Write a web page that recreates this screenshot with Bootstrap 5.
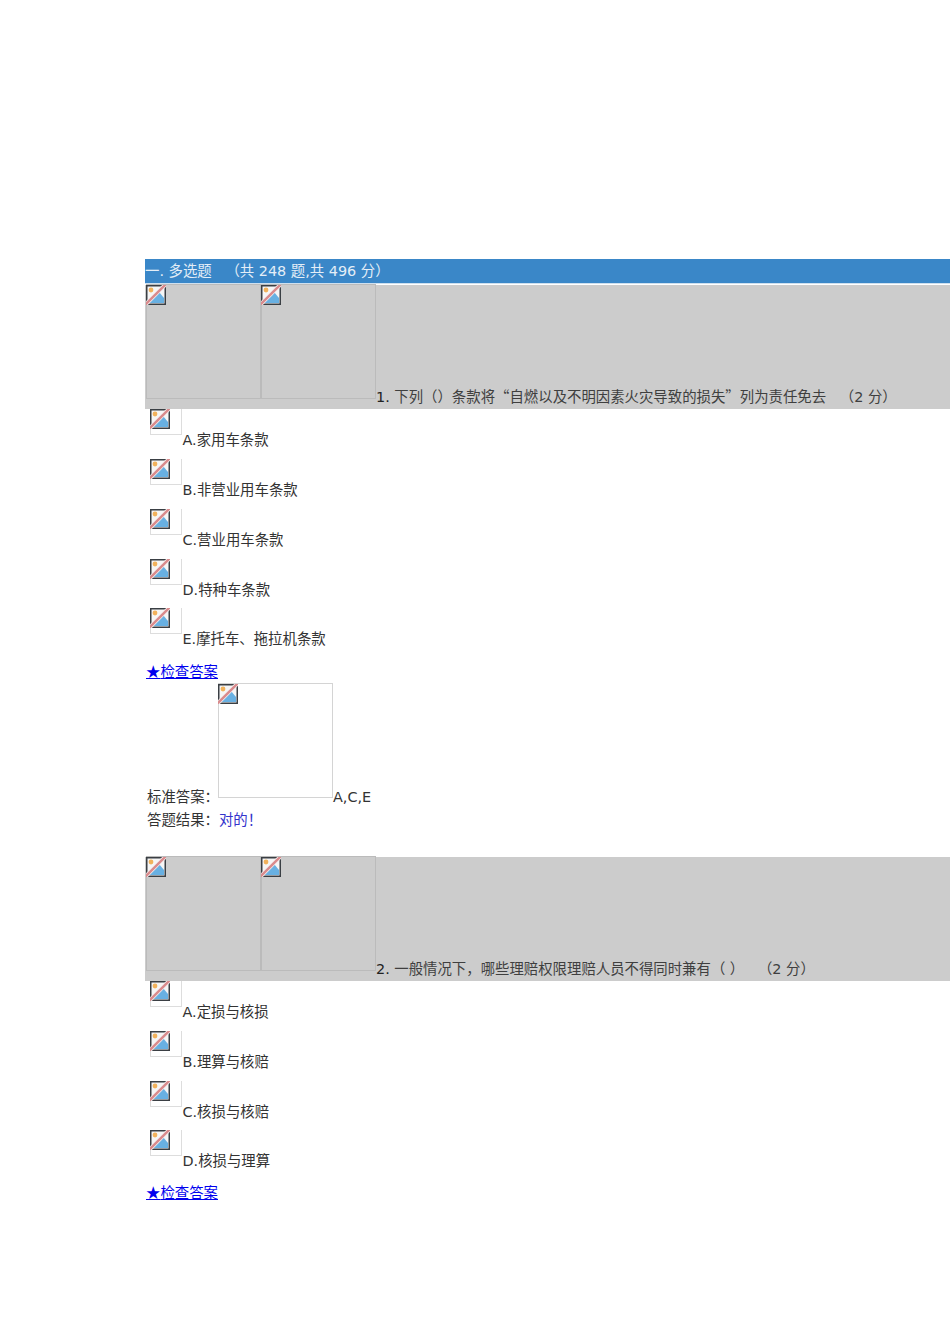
<!DOCTYPE html>
<html lang="zh">
<head>
<meta charset="utf-8">
<title>多选题</title>
<link href="https://cdn.jsdelivr.net/npm/bootstrap@5.3.0/dist/css/bootstrap.min.css" rel="stylesheet">
<style>
html,body{overflow:hidden;background:#fff}
body{font-family:"DejaVu Sans","Noto Sans CJK SC",sans-serif;font-size:14.4px;line-height:18px;color:#333;height:1344px;width:950px}
.cjk{font-family:"Noto Sans CJK SC",sans-serif}
.sheet{padding:259px 0 0 145px;width:950px}
.sec-head{background:#3a87c8;color:#e4eef7;height:24px;line-height:24px;margin-bottom:2px;white-space:nowrap;width:805px;box-shadow:0 1px 0 #cfe0ee}
.q-row{background:#ccc;height:124.25px;width:805px;white-space:nowrap}
.q-row .img-a{margin-left:1px;margin-top:-1px}
.q-row .img-b{margin-top:-1px}
.q-text{padding-bottom:4.25px;line-height:16px;color:#3f3f3f}
.q-text b{font-weight:400;color:#222}
.ph{display:block;flex:none;border:1px solid #bbb;width:115px;height:115px}
.ph svg,.ph2 svg{display:block;width:20px;height:20px;margin-left:-1px}
.ph2{display:block;flex:none;border:1px solid #ddd;border-top:0;width:32px;height:26px;margin-left:5px}
.opt{height:49.75px}
.opt .txt{margin-top:22px;margin-left:.5px;white-space:nowrap}
.opts-end{height:3.75px}
.opts-end2{height:3px}
.chk{display:block;color:#00e;text-decoration:underline;line-height:18px;margin-left:1px}
.ans{margin-left:2px;height:115px;margin-top:2px}
.ans .ph{border-color:#d4d4d4}
.ans .lab-a{margin-bottom:-8px;margin-right:-1px;line-height:18px}
.ans .lab-b{margin-bottom:-8px;line-height:18px}
.res{margin-left:2px;margin-top:13px;height:46px;line-height:18px}
.res span{color:#33c}
</style>
</head>
<body>
<svg width="0" height="0" class="position-absolute"><defs>
<symbol id="bk" viewBox="0 0 20 20">
<rect x="0.75" y="0.75" width="18.5" height="18.5" fill="#f6f6f6" stroke="#3a3f44" stroke-width="1.5"/>
<path d="M3 18L13 7l5 6v5z" fill="#68b0e2"/>
<path d="M3 18L13 7" stroke="#3a5a70" stroke-width="1" fill="none"/>
<circle cx="5" cy="5" r="2.4" fill="#f2b25c"/>
<path d="M-1 20L20 -1" stroke="#f4f0f0" stroke-width="4"/>
<path d="M-1 20L20 -1" stroke="#d98a8c" stroke-width="2.4"/>
</symbol>
</defs></svg>
<main class="sheet">
<div class="sec-head">一. 多选题 &nbsp;&nbsp;（共 248 题,共 496 分）</div>

<div class="q-row d-flex align-items-start">
<span class="ph img-a"><svg><use href="#bk"/></svg></span><span class="ph img-b"><svg><use href="#bk"/></svg></span>
<span class="q-text align-self-end"><b>1.</b> 下列（）条款将<span class="cjk">“</span>自燃以及不明因素火灾导致的损失<span class="cjk">”</span>列为责任免去 &nbsp;&nbsp;（2 分）</span>
</div>
<div class="opt d-flex"><span class="ph2"><svg><use href="#bk"/></svg></span><span class="txt">A.家用车条款</span></div>
<div class="opt d-flex"><span class="ph2"><svg><use href="#bk"/></svg></span><span class="txt">B.非营业用车条款</span></div>
<div class="opt d-flex"><span class="ph2"><svg><use href="#bk"/></svg></span><span class="txt">C.营业用车条款</span></div>
<div class="opt d-flex"><span class="ph2"><svg><use href="#bk"/></svg></span><span class="txt">D.特种车条款</span></div>
<div class="opt d-flex"><span class="ph2"><svg><use href="#bk"/></svg></span><span class="txt">E.摩托车、拖拉机条款</span></div>
<div class="opts-end"></div>
<a class="chk" href="#"><span class="cjk">★</span>检查答案</a>
<div class="ans d-flex align-items-end"><span class="lab-a">标准答案：</span><span class="ph"><svg><use href="#bk"/></svg></span><span class="lab-b">A,C,E</span></div>
<div class="res">答题结果：<span>对的！</span></div>

<div class="q-row d-flex align-items-start">
<span class="ph img-a"><svg><use href="#bk"/></svg></span><span class="ph img-b"><svg><use href="#bk"/></svg></span>
<span class="q-text align-self-end"><b>2.</b> 一般情况下，哪些理赔权限理赔人员不得同时兼有（ ） &nbsp;&nbsp;（2 分）</span>
</div>
<div class="opt d-flex"><span class="ph2"><svg><use href="#bk"/></svg></span><span class="txt">A.定损与核损</span></div>
<div class="opt d-flex"><span class="ph2"><svg><use href="#bk"/></svg></span><span class="txt">B.理算与核赔</span></div>
<div class="opt d-flex"><span class="ph2"><svg><use href="#bk"/></svg></span><span class="txt">C.核损与核赔</span></div>
<div class="opt d-flex"><span class="ph2"><svg><use href="#bk"/></svg></span><span class="txt">D.核损与理算</span></div>
<div class="opts-end2"></div>
<a class="chk" href="#"><span class="cjk">★</span>检查答案</a>
</main>
<script src="https://cdn.jsdelivr.net/npm/bootstrap@5.3.0/dist/js/bootstrap.bundle.min.js"></script>
</body>
</html>
